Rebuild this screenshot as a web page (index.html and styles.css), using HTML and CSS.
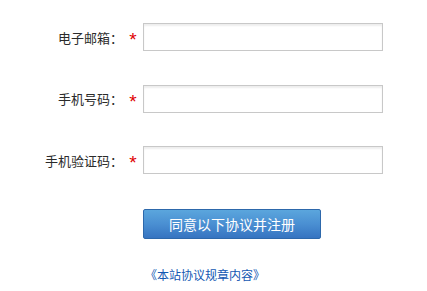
FILE: index.html
```html
<!DOCTYPE html>
<html lang="zh-CN">
<head>
<meta charset="utf-8">
<title>注册</title>
<link rel="stylesheet" href="styles.css">
</head>
<body>
<form class="form">
  <div class="row">
    <label class="label">电子邮箱：</label>
    <span class="req">*</span>
    <input class="field" type="text">
  </div>
  <div class="row">
    <label class="label">手机号码：</label>
    <span class="req">*</span>
    <input class="field" type="text">
  </div>
  <div class="row">
    <label class="label">手机验证码：</label>
    <span class="req">*</span>
    <input class="field" type="text">
  </div>
  <div class="actions">
    <button class="btn" type="button">同意以下协议并注册</button>
    <a class="terms" href="#">《本站协议规章内容》</a>
  </div>
</form>
</body>
</html>
```

FILE: styles.css
```css
html, body {
  margin: 0;
  padding: 0;
  background: #fff;
}
body {
  font-family: "Liberation Sans", "Noto Sans CJK SC", sans-serif;
  color: #333;
}
.form {
  display: flex;
  flex-direction: column;
  gap: 33.5px;
  padding-top: 23px;
}
.row {
  display: flex;
  align-items: center;
  height: 28px;
}
.label {
  width: 123px;
  text-align: right;
  font-size: 13px;
  font-family: "Noto Sans CJK SC", sans-serif;
  color: #2b2b2b;
  flex: none;
}
.req {
  width: 20px;
  text-align: center;
  color: #e00000;
  font-size: 19px;
  line-height: 19px;
  font-family: "Liberation Sans", sans-serif;
  padding-top: 5px;
  flex: none;
}
.field {
  box-sizing: border-box;
  width: 240px;
  height: 28px;
  margin: 0;
  padding: 0 4px;
  border: 1px solid #c8c8c8;
  box-shadow: inset 0 2px 2px rgba(0, 0, 0, 0.07);
  background: #fff;
  outline: none;
  flex: none;
}
.actions {
  display: flex;
  flex-direction: column;
  align-items: flex-start;
  padding-left: 143px;
  margin-top: 1.5px;
}
.btn {
  box-sizing: border-box;
  width: 178px;
  height: 30px;
  border: 1px solid #2d68ab;
  border-radius: 2px;
  background: linear-gradient(to bottom, #5ba6dd 0%, #4a8fd2 50%, #3674c1 100%);
  color: #fff;
  font-family: "Noto Sans CJK SC", sans-serif;
  font-size: 14px;
  padding: 0;
  margin: 0;
  cursor: pointer;
}
.terms {
  margin-top: 27px;
  margin-left: 2px;
  font-family: "Noto Sans CJK SC", sans-serif;
  font-size: 12px;
  color: #1358b3;
  text-decoration: none;
}
```
